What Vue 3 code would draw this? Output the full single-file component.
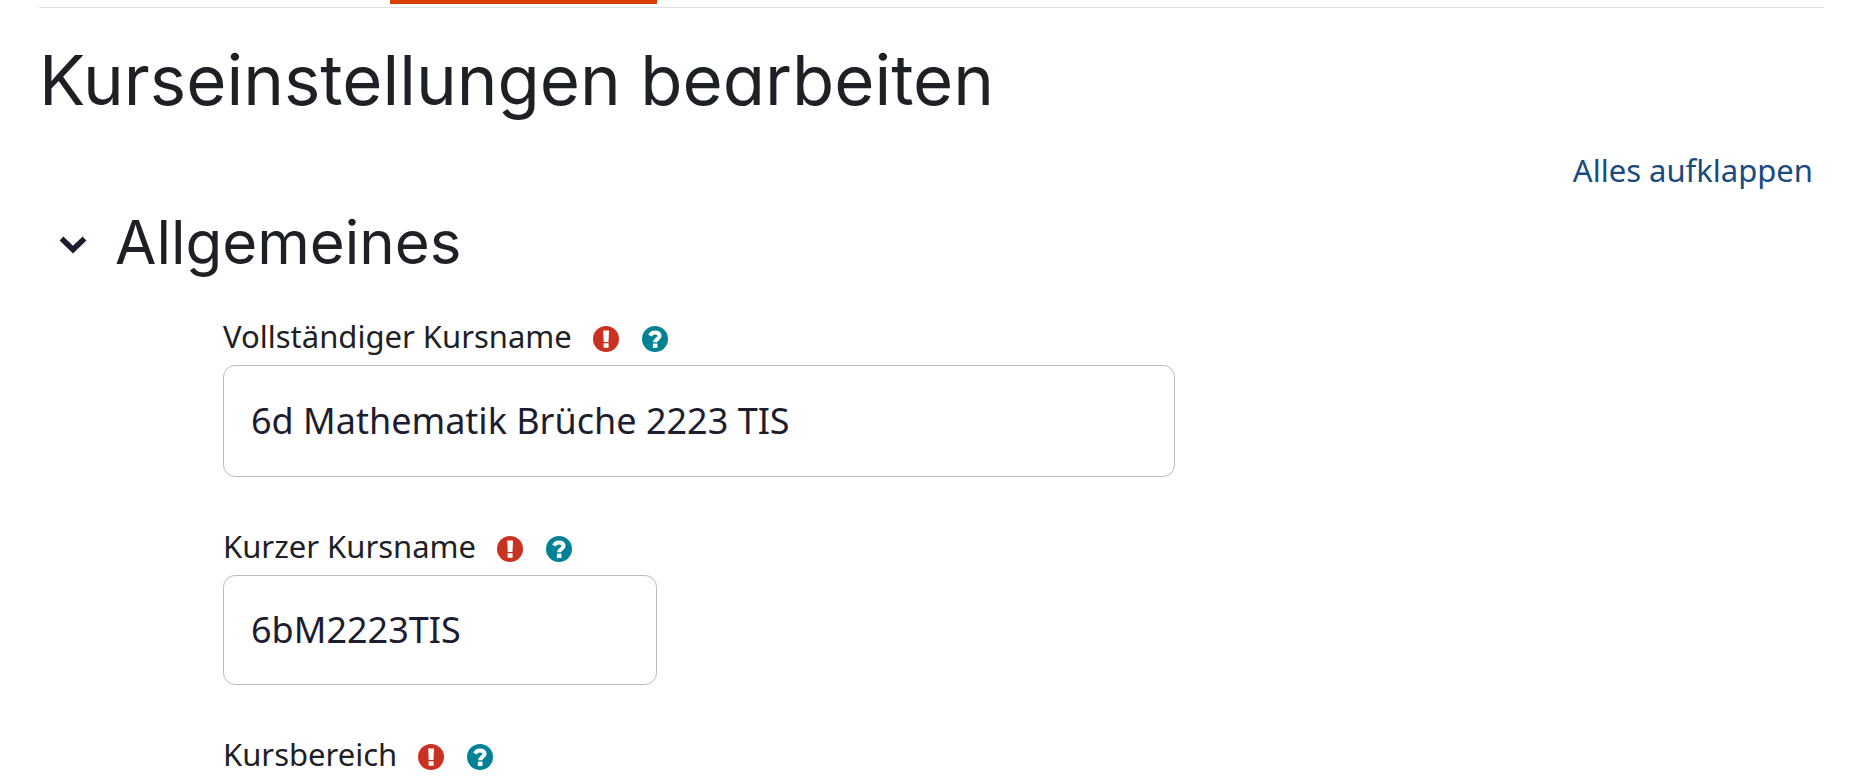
<script setup>
import { ref } from 'vue'

const open = ref(true)
const fields = ref([
  { id: 'fullname', label: 'Vollständiger Kursname', value: '6d Mathematik Brüche 2223 TIS', size: 'long' },
  { id: 'shortname', label: 'Kurzer Kursname', value: '6bM2223TIS', size: 'short' },
  { id: 'category', label: 'Kursbereich' },
])
</script>

<template>
  <main class="page">
    <nav class="tabs" aria-label="Kursnavigation">
      <span class="tab-active"></span>
    </nav>
    <h1>Kurseinstellungen bearbeiten</h1>
    <div class="expand">
      <a href="#">Alles aufklappen</a>
    </div>
    <form @submit.prevent>
      <div class="section-head">
        <button class="toggle" type="button" aria-label="Allgemeines" :aria-expanded="open" @click="open = !open">
          <svg viewBox="0 0 28 18" width="28" height="18" aria-hidden="true">
            <path d="M.6 4.400 4.400.6 14 9.800 23.600.6 27.400 4.400 14 17.600Z" fill="#1d1d2f" />
          </svg>
        </button>
        <h2>Allgemeines</h2>
      </div>
      <div v-show="open" class="fields">
        <div v-for="f in fields" :key="f.id" class="field">
          <div class="label-row">
            <label v-if="f.size" :for="f.id">{{ f.label }}</label>
            <span v-else>{{ f.label }}</span>
            <span class="icons">
              <svg viewBox="0 0 26 26" width="26" height="26" role="img" aria-label="Erforderlich">
                <circle cx="13" cy="13" r="13" fill="#ca3120" />
                <path d="M10.2 4.600h5.800l-.5 11.400h-4.800ZM10.600 17.200h5v4.600h-5Z" fill="#fff" />
              </svg>
              <button class="help" type="button" :aria-label="'Hilfe zu ' + f.label">
                <svg viewBox="0 0 26 26" width="26" height="26" aria-hidden="true">
                  <circle cx="13" cy="13" r="13" fill="#008196" />
                  <path d="M8 9.600C9 7.400 10.800 6.400 13 6.400C15.800 6.400 17.600 7.800 17.600 9.900C17.600 12.900 13.200 12.700 13.200 16.200" fill="none" stroke="#fff" stroke-width="4" />
                  <path d="M10.900 17.600h4.600v4.400h-4.600Z" fill="#fff" />
                </svg>
              </button>
            </span>
          </div>
          <input v-if="f.size" :id="f.id" v-model="f.value" :class="f.size" type="text" required />
        </div>
      </div>
    </form>
  </main>
</template>

<style>
body {
  background: #fff;
}
</style>

<style scoped>
.page {
  padding: 0 31px 4px 39px;
  color: #1d2125;
  font-family: "Noto Sans", sans-serif;
  font-size: 31px;
  line-height: 40px;
}
.tabs {
  height: 7px;
  border-bottom: 1px solid #dee2e6;
}
.tab-active {
  display: block;
  width: 267px;
  height: 4px;
  margin-left: 351px;
  background: #d63f04;
}
h1,
h2 {
  margin: 0;
  font-family: Inter, sans-serif;
  font-weight: 400;
  font-feature-settings: "cv11";
}
h1 {
  margin-top: 32px;
  font-size: 69px;
  line-height: 80px;
}
.expand {
  display: flex;
  justify-content: flex-end;
  margin-top: 30px;
  padding-right: 11px;
}
a {
  color: #194a80;
  text-decoration: none;
}
.section-head {
  display: flex;
  align-items: center;
  gap: 28px;
  margin-top: 16px;
  padding-left: 20px;
}
h2 {
  font-size: 60px;
  line-height: 72px;
}
button {
  display: block;
  padding: 0;
  border: 0;
  background: none;
  cursor: pointer;
}
.toggle {
  padding-top: 6px;
}
svg {
  display: block;
}
.fields {
  display: flex;
  flex-direction: column;
  gap: 49px;
  margin-top: 38px;
  padding-left: 184px;
}
.label-row {
  display: flex;
  align-items: flex-end;
  gap: 21px;
}
.icons {
  display: flex;
  gap: 23px;
  padding-bottom: 4px;
}
input {
  display: block;
  box-sizing: border-box;
  max-width: 100%;
  margin-top: 9px;
  padding: 0 27px 2px;
  border: 1px solid #bcbcbc;
  border-radius: 12px;
  background: #fff;
  color: #1d1d2f;
  font: 36px/54px "Noto Sans", sans-serif;
}
.long {
  width: 952px;
  height: 112px;
}
.short {
  width: 434px;
  height: 110px;
}
</style>
